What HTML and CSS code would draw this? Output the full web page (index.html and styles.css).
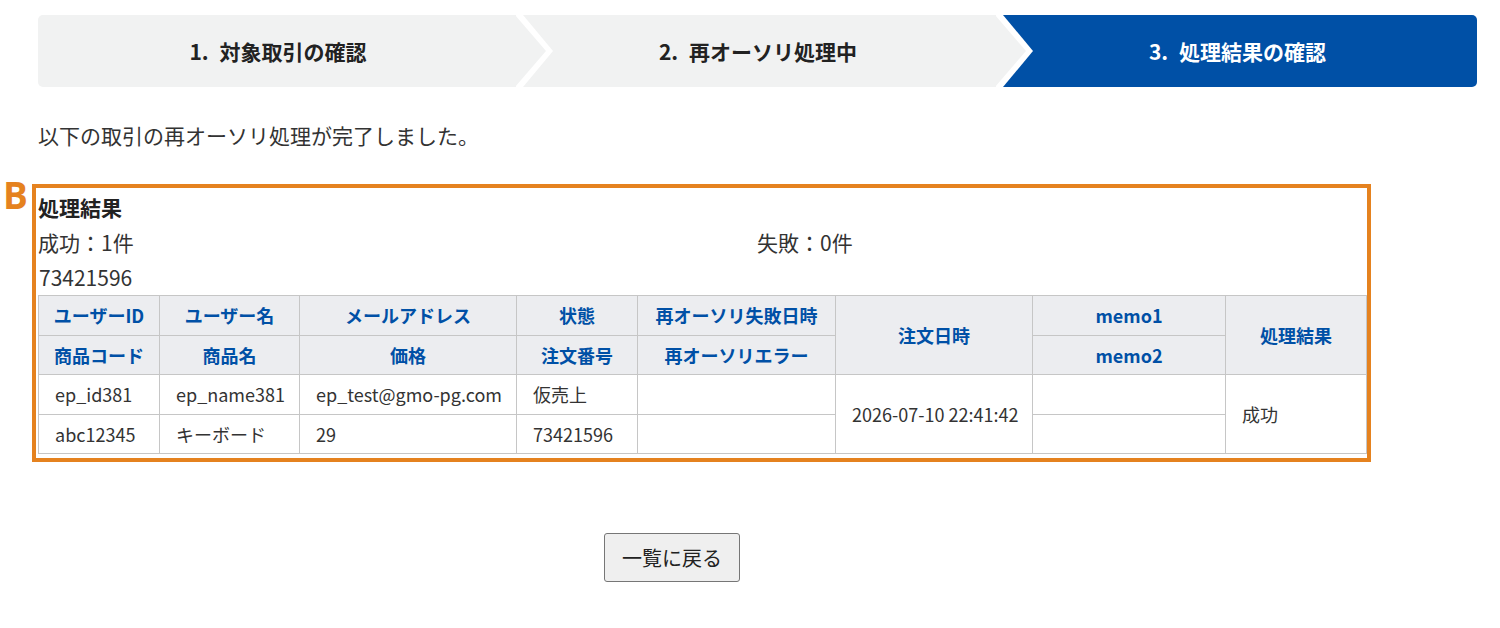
FILE: index.html
```html
<!DOCTYPE html>
<html lang="ja">
<head>
<meta charset="utf-8">
<title>再オーソリ処理結果</title>
<link rel="stylesheet" href="styles.css">
</head>
<body>
<div class="page">
  <ol class="steps">
    <li class="step"><span class="num">1.</span>対象取引の確認</li>
    <li class="step"><span class="num">2.</span>再オーソリ処理中</li>
    <li class="step step-current"><span class="num">3.</span>処理結果の確認</li>
  </ol>

  <p class="lead">以下の取引の再オーソリ処理が完了しました。</p>

  <section class="result">
    <span class="mark">B</span>
    <h2 class="result-title">処理結果</h2>
    <div class="counts">
      <span>成功：1件</span>
      <span>失敗：0件</span>
    </div>
    <div class="order-no">73421596</div>
    <table class="grid">
      <colgroup>
        <col class="c1"><col class="c2"><col class="c3"><col class="c4">
        <col class="c5"><col class="c6"><col class="c7"><col class="c8">
      </colgroup>
      <thead>
        <tr>
          <th>ユーザーID</th>
          <th>ユーザー名</th>
          <th>メールアドレス</th>
          <th>状態</th>
          <th>再オーソリ失敗日時</th>
          <th rowspan="2">注文日時</th>
          <th>memo1</th>
          <th rowspan="2">処理結果</th>
        </tr>
        <tr>
          <th>商品コード</th>
          <th>商品名</th>
          <th>価格</th>
          <th>注文番号</th>
          <th>再オーソリエラー</th>
          <th>memo2</th>
        </tr>
      </thead>
      <tbody>
        <tr>
          <td>ep_id381</td>
          <td>ep_name381</td>
          <td>ep_test@gmo-pg.com</td>
          <td>仮売上</td>
          <td></td>
          <td rowspan="2">2026-07-10 22:41:42</td>
          <td></td>
          <td rowspan="2">成功</td>
        </tr>
        <tr>
          <td>abc12345</td>
          <td>キーボード</td>
          <td>29</td>
          <td>73421596</td>
          <td></td>
          <td></td>
        </tr>
      </tbody>
    </table>
  </section>

  <div class="actions">
    <button type="button" class="btn">一覧に戻る</button>
  </div>
</div>
</body>
</html>
```

FILE: styles.css
```css
* {
  box-sizing: border-box;
}

html, body {
  margin: 0;
  padding: 0;
  background: #fff;
}

body {
  font-family: "Noto Sans CJK JP", "Noto Sans", sans-serif;
  color: #333;
}

.page {
  padding: 15px 23px 0 38px;
}

/* progress steps */
.steps {
  list-style: none;
  margin: 0;
  padding: 0;
  display: grid;
  grid-template-columns: 480px 480px auto;
  height: 72px;
  border-radius: 5px;
  overflow: hidden;
}

.step {
  position: relative;
  display: flex;
  align-items: center;
  justify-content: center;
  background: #f1f2f2;
  color: #222;
  font-size: 21px;
  font-weight: 700;
}

.step .num {
  margin-right: 11px;
}

.step:not(:last-child)::before,
.step:not(:last-child)::after {
  content: "";
  position: absolute;
  top: 0;
  height: 100%;
}

/* white band around the chevron */
.step:not(:last-child)::before {
  left: calc(100% - 2px);
  width: 38px;
  background: #fff;
  clip-path: polygon(0 0, 7px 0, 37px 50%, 7px 100%, 0 100%);
  z-index: 1;
}

/* chevron point */
.step:not(:last-child)::after {
  left: calc(100% - 3px);
  width: 31px;
  background: #f1f2f2;
  clip-path: polygon(0 0, 100% 50%, 0 100%);
  z-index: 2;
}

.step-current {
  background: #0050a6;
  color: #fff;
}

.lead {
  margin: 33px 0 0;
  font-size: 21px;
  line-height: 30px;
  color: #333;
}

/* result block */
.result {
  position: relative;
  margin-top: 34px;
  margin-left: -6px;
  width: 1339px;
  padding: 2px 2px 4px 2px;
  border: 4px solid #e5821f;
}

.mark {
  position: absolute;
  left: -33px;
  top: -12px;
  font-size: 37px;
  font-weight: 700;
  line-height: 1;
  color: #e5821f;
  font-family: "Open Sans", "Noto Sans", sans-serif;
}

.result-title {
  margin: 0;
  font-size: 21px;
  font-weight: 700;
  line-height: 34px;
  color: #222;
}

.counts {
  display: grid;
  grid-template-columns: 719px auto;
  font-size: 21px;
  line-height: 36px;
  color: #333;
}

.order-no {
  font-size: 21px;
  line-height: 35px;
  color: #333;
  margin-left: 1px;
}

.grid {
  border-collapse: collapse;
  table-layout: fixed;
  width: 1328px;
  font-size: 18px;
}

.c1 { width: 121px; }
.c2 { width: 140px; }
.c3 { width: 217px; }
.c4 { width: 121px; }
.c5 { width: 198px; }
.c6 { width: 197px; }
.c7 { width: 193px; }
.c8 { width: 141px; }

.grid th,
.grid td {
  border: 1px solid #c6c6c6;
  height: 39.5px;
  padding: 0 12px;
  white-space: nowrap;
}

.grid th {
  background: #ecedf0;
  color: #0050a6;
  font-weight: 700;
  text-align: center;
}

.grid td {
  color: #333;
  text-align: left;
  padding-left: 16px;
}

.actions {
  margin-top: 71px;
  padding-left: 566px;
}

.btn {
  width: 136px;
  height: 49px;
  font-family: inherit;
  font-size: 20px;
  color: #222;
  background: #efefef;
  border: 1px solid #767676;
  border-radius: 3px;
  padding: 0;
}
```
